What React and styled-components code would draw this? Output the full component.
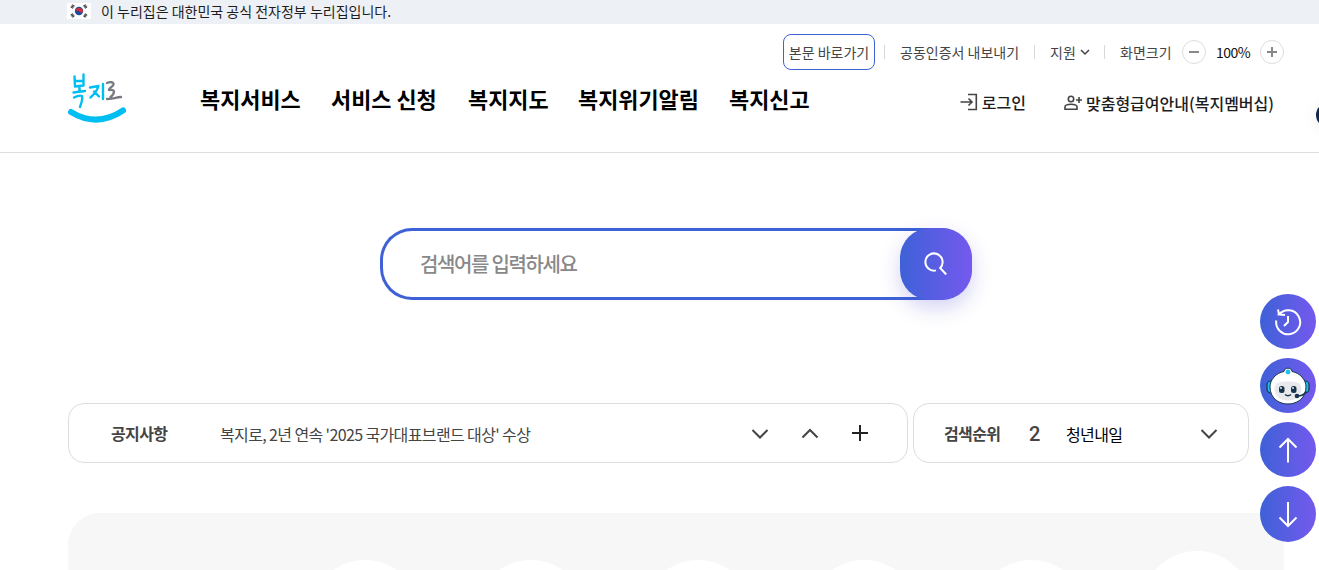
import React from 'react';
import styled, { createGlobalStyle } from 'styled-components';

const GlobalStyle = createGlobalStyle`
  * {
    box-sizing: border-box;
  }

  body {
    margin: 0;
    background: #fff;
    color: #1d1d1d;
    font-family: 'Noto Sans CJK KR', 'Noto Sans', sans-serif;
    overflow: hidden;
  }

  button {
    padding: 0;
    border: 0;
    background: none;
    font-family: inherit;
    color: inherit;
    cursor: pointer;
  }
`;

const Page = styled.div`
  position: relative;
  height: 570px;
  overflow: hidden;
`;

const GovBanner = styled.div`
  display: flex;
  align-items: center;
  gap: 10px;
  height: 24px;
  padding: 0 0 2px 67px;
  background: #edf0f5;
  font-size: 14px;
  line-height: 22px;
`;

const Flag = styled.svg`
  display: block;
  flex: none;
  width: 24px;
  height: 16px;
`;

const Header = styled.header`
  display: flex;
  height: 129px;
  padding-left: 67px;
  border-bottom: 1px solid #ddd;
`;

const Logo = styled.svg`
  flex: none;
  width: 60px;
  height: 54px;
  margin-top: 47px;
`;

const Nav = styled.nav`
  display: flex;
  flex: none;
  gap: 31px;
  margin: 59px 0 0 73px;
  font-size: 21.9px;
  font-weight: 700;
  line-height: 32px;
  color: #000;
  white-space: nowrap;
`;

const NavItem = styled.a`
  width: ${({ $width }) => $width}px;
`;

const HeaderSide = styled.div`
  flex: 1;
  min-width: 0;
  display: flex;
  flex-direction: column;
  align-items: flex-end;
  padding: 10px 35px 0 0;
`;

const UtilRow = styled.div`
  display: flex;
  align-items: center;
  height: 36px;
  font-size: 14px;
  line-height: 20px;
  color: #444;
  white-space: nowrap;
`;

const SkipLink = styled.a`
  width: 92px;
  height: 36px;
  border: 1px solid #3e61d7;
  border-radius: 8px;
  line-height: 34px;
  text-align: center;
`;

const Divider = styled.span`
  width: 1px;
  height: 14px;
  margin: 0 15px 0 ${({ $before }) => $before}px;
  background: #d8d8d8;
`;

const UtilText = styled.span`
  width: ${({ $width }) => $width}px;
`;

const ZoomValue = styled.span`
  width: 54px;
  letter-spacing: -0.5px;
  text-align: center;
  color: #111;
`;

const ZoomButton = styled.button`
  display: flex;
  align-items: center;
  justify-content: center;
  width: 24px;
  height: 24px;
  border: 1px solid #ddd;
  border-radius: 50%;
`;

const MemberRow = styled.div`
  display: flex;
  gap: 38px;
  margin: 20px 10px 0 0;
  font-size: 16px;
  font-weight: 500;
  line-height: 24px;
  white-space: nowrap;
`;

const MemberLink = styled.a`
  display: flex;
  align-items: center;
  gap: 4px;
  padding-bottom: ${({ $lift }) => $lift || 0}px;
`;

const SearchBar = styled.div`
  display: flex;
  justify-content: space-between;
  width: 592px;
  height: 72px;
  margin: 75px 0 0 380px;
  border-radius: 32px;
  box-shadow: inset 0 0 0 3px #3e61d7;
`;

const SearchText = styled.span`
  padding-left: 40px;
  font-size: 20px;
  font-weight: 500;
  letter-spacing: -1.4px;
  word-spacing: 0.5px;
  line-height: 71px;
  color: #888;
`;

const SearchButton = styled.button`
  display: flex;
  align-items: center;
  justify-content: center;
  width: 72px;
  height: 72px;
  padding: 0 1px 2px 0;
  border-radius: 30px;
  background: linear-gradient(90deg, #3e61d7, #7559ee);
  box-shadow: 0 8px 20px rgba(80, 80, 210, 0.25);
`;

const InfoRow = styled.div`
  display: flex;
  gap: 5px;
  margin: 103px 0 0 68px;
`;

const InfoBox = styled.section`
  display: flex;
  align-items: center;
  width: ${({ $width }) => $width}px;
  height: 60px;
  padding: ${({ $padding }) => $padding};
  border: 1px solid #ddd;
  border-radius: 16px;
  font-size: 16px;
  line-height: 24px;
  letter-spacing: -0.62px;
  white-space: nowrap;
`;

const InfoTitle = styled.strong`
  width: ${({ $width }) => $width}px;
  font-weight: 700;
  color: #444;
`;

const NoticeText = styled.span`
  flex: 1;
  padding-top: 1px;
  color: #444;
`;

const NoticeControls = styled.div`
  display: flex;
  gap: 30px;
`;

const Rank = styled.span`
  width: 37px;
  padding-top: 2px;
  font-family: Roboto, sans-serif;
  font-size: 20px;
  font-weight: 500;
  color: #444;
`;

const RankWord = styled.span`
  flex: 1;
  padding-top: 1px;
  color: #000;
`;

const ServicePanel = styled.section`
  display: flex;
  gap: 56.4px;
  width: 1216px;
  height: 160px;
  margin-top: 50px;
  margin-left: 68px;
  padding: 47px 0 0 242px;
  border-radius: 32px 0 0 0;
  background: #f7f7f7;
`;

const ServiceCircle = styled.div`
  flex: none;
  width: 110px;
  height: 110px;
  margin-top: ${({ $raised }) => ($raised ? -9 : 0)}px;
  border-radius: 50%;
  background: #fff;
`;

const QuickMenu = styled.aside`
  position: fixed;
  top: 294px;
  left: 1260px;
  display: flex;
  flex-direction: column;
  gap: 9px;
`;

const QuickButton = styled.button`
  display: flex;
  align-items: center;
  justify-content: center;
  width: 56px;
  height: 55px;
  border-radius: 50%;
  background: linear-gradient(90deg, #3e61d7, #7559ee);

  &:last-child {
    height: 56px;
  }
`;

const SideHandle = styled.div`
  position: fixed;
  top: 103px;
  left: 1316px;
  width: 24px;
  height: 24px;
  border-radius: 50%;
  background: #10294b;
  box-shadow: 0 2px 16px rgba(0, 0, 0, 0.08);
`;

const Icon = styled.svg`
  display: block;
  flex: none;
  fill: none;
  stroke: ${({ $color }) => $color || '#444'};
  stroke-width: ${({ $stroke }) => $stroke || 2};
`;

const menus = [
  { label: '복지서비스', width: 100 },
  { label: '서비스 신청', width: 106 },
  { label: '복지지도', width: 79 },
  { label: '복지위기알림', width: 120 },
  { label: '복지신고', width: 80 },
];

const Chevron = ({ up }) => (
  <Icon width="20" height="20" viewBox="0 0 20 20">
    <path d={up ? 'M2.5 14.5 10 7l7.5 7.5' : 'M2.5 7 10 14.5 17.5 7'} />
  </Icon>
);

const KoreanFlag = () => (
  <Flag viewBox="0 0 24 16">
    <rect width="24" height="16" fill="#fff" />
    <circle cx="12" cy="8" r="4.2" fill="#1d4b9b" />
    <path d="M7.9 8.8A4.2 4.2 0 0 1 16.2 8.3C15.5 10 13.5 9.7 12 8.5S8.9 6.8 7.9 8.8Z" fill="#d22f3e" />
    <g stroke="#333" strokeWidth="2.8" strokeDasharray="1 0.3">
      <path d="m4.5 5 2.3-3M17.2 2l2.3 3M4.5 11l2.3 3M17.2 14l2.3-3" />
    </g>
  </Flag>
);

const BokjiroLogo = () => (
  <Logo viewBox="0 0 60 54" fill="none" strokeLinecap="round" strokeLinejoin="round">
    <g stroke="#00bdf2" strokeWidth="2.4">
      <path d="M7.5 5.5 8 15.5M16.5 3.5v11M8 10h8M8 15.5l8-1M12.5 15.5V20M6.5 21.5 18 20M7 26.5c3-1.5 6-2.5 8-1.5 1 3-.5 7-2 11" />
      <path d="M23 16.5 31.5 15c-1.500 5-4 8-8 11.500M27 20.500l5 5M36 13v15" />
    </g>
    <path d="M40 12c3-1.5 7-1 6.5 1.5 0 2-5 3.5-4.5 5.5 2 0 5-.5 5 1.5 0 2-1.5 4-3.500 5.500M40 28c4 0 9-1.500 14-2" stroke="#777b80" strokeWidth="2.3" />
    <path d="M4 41Q30 57 56 39.5" stroke="#00bdf2" strokeWidth="6" />
  </Logo>
);

const Robot = () => (
  <svg width="44" height="38" viewBox="0 0 44 38">
    <rect x="1" y="14" width="8" height="12" rx="4" fill="#20bdf2" stroke="#17344c" strokeWidth="1.2" />
    <rect x="35" y="14" width="8" height="12" rx="4" fill="#20bdf2" stroke="#17344c" strokeWidth="1.2" />
    <path d="M18 4.5c0-4.500 8-4.500 8 0 8 1.500 14 8 14 15.500C40 30.500 32 37 22 37S4 30.500 4 20C4 12.500 10 6 18 4.500Z" fill="#fff" stroke="#17344c" strokeWidth="1" />
    <path d="M8.5 22c0-6 5-7.500 13.500-7.500s13.500 1.500 13.500 7.500c0 7-6 11.500-13.500 11.500S8.500 29 8.500 22Z" fill="#e8e9ed" />
    <circle cx="22" cy="5" r="2.4" fill="#20bdf2" />
    <rect x="13" y="19" width="5.5" height="7" rx="2.5" fill="#17344c" />
    <rect x="25" y="19" width="5.5" height="7" rx="2.5" fill="#17344c" />
    <path d="M19 27.500q3 2.500 6 0M31 29c5 0 8-2 9-5" fill="none" stroke="#17344c" strokeWidth="1.5" />
    <circle cx="31" cy="29" r="2.3" fill="#17344c" />
    <circle cx="15" cy="21" r="0.9" fill="#fff" />
    <circle cx="27" cy="21" r="0.9" fill="#fff" />
  </svg>
);

const App = () => (
  <Page>
    <GlobalStyle />
    <GovBanner>
      <KoreanFlag />
      이 누리집은 대한민국 공식 전자정부 누리집입니다.
    </GovBanner>

    <Header>
      <BokjiroLogo />
      <Nav>
        {menus.map(({ label, width }) => (
          <NavItem key={label} $width={width}>{label}</NavItem>
        ))}
      </Nav>
      <HeaderSide>
        <UtilRow>
          <SkipLink>본문 바로가기</SkipLink>
          <Divider $before={9} />
          <UtilText $width={119}>공동인증서 내보내기</UtilText>
          <Divider $before={15} />
          <UtilText $width={30}>지원</UtilText>
          <Icon width="10" height="10" viewBox="0 0 10 10" $stroke={1.5}>
            <path d="m1 3 4 4 4-4" />
          </Icon>
          <Divider $before={14} />
          <UtilText $width={62}>화면크기</UtilText>
          <ZoomButton aria-label="축소">
            <Icon width="10" height="10" viewBox="0 0 10 10" $color="#888"><path d="M0 5h10" /></Icon>
          </ZoomButton>
          <ZoomValue>100%</ZoomValue>
          <ZoomButton aria-label="확대">
            <Icon width="10" height="10" viewBox="0 0 10 10" $color="#888"><path d="M0 5h10M5 0v10" /></Icon>
          </ZoomButton>
        </UtilRow>
        <MemberRow>
          <MemberLink $lift={2}>
            <Icon width="18" height="18" viewBox="0 0 18 18" $stroke={1.6}>
              <path d="M8 1.5h8.300v15H8M0.500 9H12M8.500 5.500 12 9l-3.500 3.500" />
            </Icon>
            로그인
          </MemberLink>
          <MemberLink>
            <Icon width="18" height="18" viewBox="0 0 18 18" $stroke={1.6}>
              <circle cx="7" cy="5" r="2.7" />
              <path d="M1 15.3V13c0-1.500 2.500-2.700 6-2.700s6 1.200 6 2.700v2.300ZM12 6h6M15 3v6" />
            </Icon>
            맞춤형급여안내(복지멤버십)
          </MemberLink>
        </MemberRow>
      </HeaderSide>
    </Header>

    <SearchBar>
      <SearchText>검색어를 입력하세요</SearchText>
      <SearchButton aria-label="검색">
        <Icon width="24" height="24" viewBox="0 0 24 24" $color="#fff">
          <path d="M12 19.4A8.6 8.6 0 1 1 16.2 17L22.200 23.500" />
        </Icon>
      </SearchButton>
    </SearchBar>

    <InfoRow>
      <InfoBox $width={840} $padding="0 37px 0 42px">
        <InfoTitle $width={109}>공지사항</InfoTitle>
        <NoticeText>복지로, 2년 연속 '2025 국가대표브랜드 대상' 수상</NoticeText>
        <NoticeControls>
          <Chevron />
          <Chevron up />
          <Icon width="20" height="20" viewBox="0 0 20 20" $color="#222">
            <path d="M2 10h16M10 2v16" />
          </Icon>
        </NoticeControls>
      </InfoBox>
      <InfoBox $width={336} $padding="0 29px 0 30px">
        <InfoTitle $width={85}>검색순위</InfoTitle>
        <Rank>2</Rank>
        <RankWord>청년내일</RankWord>
        <Chevron />
      </InfoBox>
    </InfoRow>

    <ServicePanel>
      {[0, 1, 2, 3, 4, 5].map((n) => (
        <ServiceCircle key={n} $raised={n === 5} />
      ))}
    </ServicePanel>

    <SideHandle />
    <QuickMenu>
      <QuickButton aria-label="최근 이용">
        <Icon width="28" height="28" viewBox="0 0 28 28" $color="#fff">
          <path d="M2.3 12.5A12 12 0 1 0 5 6.5L11 7M4 1.5 5 6.500M14 8v6l-4 4" />
        </Icon>
      </QuickButton>
      <QuickButton aria-label="챗봇"><Robot /></QuickButton>
      <QuickButton aria-label="위로">
        <Icon width="24" height="28" viewBox="0 0 24 28" $color="#fff">
          <path d="M12 26.5V3M3.500 11.500 12 3l8.500 8.500" />
        </Icon>
      </QuickButton>
      <QuickButton aria-label="아래로">
        <Icon width="24" height="28" viewBox="0 0 24 28" $color="#fff">
          <path d="M12 2v24M3.500 17.500 12 26l8.500-8.500" />
        </Icon>
      </QuickButton>
    </QuickMenu>
  </Page>
);

export default App;
